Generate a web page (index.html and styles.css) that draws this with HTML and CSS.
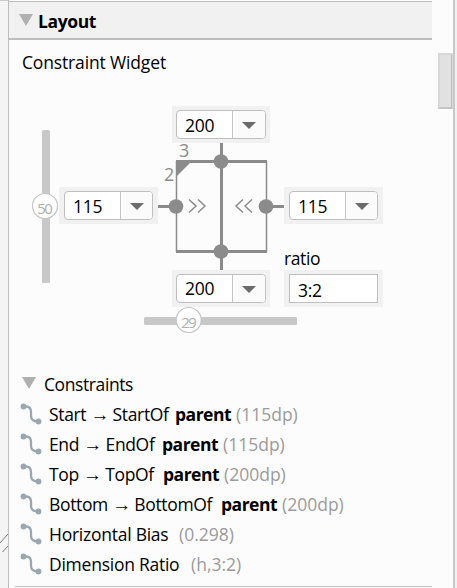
FILE: index.html
```html
<!DOCTYPE html>
<html lang="en">
<head>
<meta charset="utf-8">
<title>Layout</title>
<link rel="stylesheet" href="styles.css">
</head>
<body>
<div class="app">
  <aside class="gutter">
    <svg width="8" height="588" viewBox="0 0 8 588"><path d="M0 .5H8" stroke="#c9c9c9"/><path d="M0 543L8 534M2.500 552L8 546" stroke="#777" fill="none"/></svg>
  </aside>
  <main class="panel">
    <header class="header"><i class="twisty"></i><h1>Layout</h1></header>
    <h2 class="title">Constraint Widget</h2>
    <section class="widget">
      <svg class="diagram" width="423" height="260" viewBox="9 90 423 260">
        <g fill="#c8c8c8"><rect x="42" y="130" width="8" height="153" rx="1.500"/><rect x="144" y="317" width="153" height="8" rx="1.500"/></g>
        <g fill="#fff" stroke="#c4c4c4" stroke-width="1.200"><circle cx="45" cy="206" r="12.500"/><circle cx="188.700" cy="320" r="12.500"/></g>
        <g class="bias"><text x="37.300" y="213.500" textLength="15.500">50</text><text x="181.300" y="328" textLength="15.500">29</text></g>
        <g stroke="#8b8b8b" fill="none">
          <path stroke-width="3" d="M176 161.500H267M176 251.500H267M221.500 143V270M158 206.500H176M266 206.500H284"/>
          <path stroke-width="1.500" d="M176.500 161V252M266.500 161V252"/>
          <path stroke-width="1.500" d="M189 199.500L196 206L189 212.500M198 199.500L205 206L198 212.500M243 199.500L236 206L243 212.500M252 199.500L245 206L252 212.500"/>
        </g>
        <g fill="#8b8b8b"><path d="M176 161H192L176 177Z"/><circle cx="221" cy="161.500" r="7.300"/><circle cx="221" cy="251.500" r="7.300"/><circle cx="176" cy="206.500" r="7.300"/><circle cx="266" cy="206.500" r="7.300"/></g>
        <g class="sides"><text x="179" y="156.700">3</text><text x="164" y="181">2</text></g>
      </svg>
      <div class="field top"><div class="combo"><span>200</span><b></b></div></div>
      <div class="field left"><div class="combo"><span>115</span><b></b></div></div>
      <div class="field right"><div class="combo"><span>115</span><b></b></div></div>
      <div class="field bottom"><div class="combo"><span>200</span><b></b></div></div>
      <label class="label">ratio</label>
      <div class="field ratio"><div class="entry">3:2</div></div>
    </section>
    <section class="constraints">
      <h3><i class="twisty"></i><span>Constraints</span></h3>
      <ul>
        <li><svg class="link" viewBox="0 0 22 22"><use href="#link"/></svg><span class="name n1">Start <i>→</i> StartOf</span><strong>parent</strong><em>(115dp)</em></li>
        <li><svg class="link" viewBox="0 0 22 22"><use href="#link"/></svg><span class="name n2">End <i>→</i> EndOf</span><strong>parent</strong><em>(115dp)</em></li>
        <li><svg class="link" viewBox="0 0 22 22"><use href="#link"/></svg><span class="name n3">Top <i>→</i> TopOf</span><strong>parent</strong><em>(200dp)</em></li>
        <li><svg class="link" viewBox="0 0 22 22"><use href="#link"/></svg><span class="name n4">Bottom <i>→</i> BottomOf</span><strong>parent</strong><em>(200dp)</em></li>
        <li><svg class="link" viewBox="0 0 22 22"><use href="#link"/></svg><span class="name n5">Horizontal Bias</span><em>(0.298)</em></li>
        <li><svg class="link" viewBox="0 0 22 22"><use href="#link"/></svg><span class="name n6">Dimension Ratio</span><em>(h,3:2)</em></li>
      </ul>
    </section>
    <hr>
  </main>
  <div class="scroll"><div class="thumb"></div></div>
</div>
<svg width="0" height="0" class="defs"><symbol id="link" viewBox="0 0 22 22"><path d="M3.500 3.500H6C9.500 3.500 11 5.500 11 9V13C11 16.500 13 18.500 18.500 18.500" fill="none" stroke="#9aa7b0" stroke-width="2.300"/><circle cx="3.500" cy="3.500" r="2.900" fill="#9aa7b0"/><circle cx="18.500" cy="18.500" r="2.900" fill="#9aa7b0"/></symbol></svg>
</body>
</html>
```
FILE: styles.css
```css
* { box-sizing: border-box; }
body { margin: 0; overflow: hidden; font: 17.5px/24px "Open Sans", "Noto Sans", sans-serif; letter-spacing: -.25px; color: #000; background: #fcfcfc; }
h1, h2, h3, ul { margin: 0; padding: 0; font-size: inherit; font-weight: 400; }
i, em { font-style: normal; }
.defs { display: block; }
.app { display: flex; height: 588px; }
.gutter { width: 9px; background: #f4f4f4; border-right: 1px solid #bdbdbd; }
.gutter svg { display: block; }
.panel { width: 423px; }
.header { display: flex; height: 39px; margin-top: 1px; border-top: 1px solid #bdbdbd; border-bottom: 2px solid #bdbdbd; background: #f1f1f1; padding: 7px 0 0 10px; }
.header h1 { margin: 0 0 0 5px; font-weight: 700; line-height: 24px; letter-spacing: -.4px; }
.twisty { width: 14px; height: 12px; background: #b0b0b0; clip-path: polygon(0 0, 100% 0, 50% 100%); flex: none; }
.header .twisty { margin-top: 5px; }
.title { height: 50px; padding: 10px 0 0 13px; letter-spacing: -.15px; }
.widget { display: grid; width: 423px; height: 260px; grid-template-columns: 50px 99px 14px 98px 14px 99px 1fr; grid-template-rows: 16px 37px 44px 37px 23px 23px 37px 1fr; }
.diagram { grid-area: 1 / 1 / -1 / -1; }
.diagram text { letter-spacing: 0; }
.bias { font-size: 15px; fill: #b0b0b0; }
.sides { font-size: 18px; fill: #8b8b8b; }
.field { background: #f1f1f1; padding: 4px 4px 4px 5px; }
.top { grid-area: 2 / 4; padding-left: 4px; }
.left { grid-area: 4 / 2; }
.right { grid-area: 4 / 6; }
.bottom { grid-area: 7 / 4; padding-left: 4px; }
.label { grid-area: 6 / 6; line-height: 24px; margin-top: -1px; letter-spacing: -.4px; }
.ratio { grid-area: 7 / 6; }
.combo { display: flex; height: 29px; border: 1px solid #bfbfbf; border-radius: 4px; background: #fff; overflow: hidden; }
.combo span { width: 55px; padding-left: 8px; line-height: 28px; letter-spacing: -.2px; }
.bottom span { line-height: 26px; }
.left .combo, .right .combo { margin-right: 1px; }
.combo b { flex: 1; border-left: 1px solid #c4c4c4; background: #fbfbfb; display: flex; align-items: center; justify-content: center; }
.combo b::after { content: ""; border: 7px solid transparent; border-top-color: #6b6b6b; border-bottom: 0; margin-top: 2px; }
.entry { height: 29px; border: 1px solid #bfbfbf; background: #fff; padding-left: 8px; line-height: 31px; margin-right: 1px; }
.constraints { padding-left: 11px; padding-top: 22px; }
.constraints h3 { display: flex; height: 28px; padding-left: 2px; gap: 8px; line-height: 24px; letter-spacing: -.4px; }
.constraints .twisty { margin-top: 5px; }
ul { list-style: none; }
li { display: flex; height: 30px; line-height: 28px; white-space: nowrap; }
.link { width: 22px; height: 22px; flex: none; margin: 3px 7px 0 0; }
.name { flex: none; letter-spacing: -.35px; }
.n5, .n6 { letter-spacing: -.25px; }
.name i { display: inline-block; width: 18px; text-align: center; font-family: "Liberation Sans", sans-serif; font-size: 19px; line-height: 20px; }
strong { width: 61px; letter-spacing: -.5px; }
em { color: #9b9b9b; letter-spacing: 0; }
.n1 { width: 126px; } .n2 { width: 113px; } .n3 { width: 114px; } .n4 { width: 172px; } .n5 { width: 130px; } .n6 { width: 142px; }
hr { height: 1px; margin: 6px 0 0 6px; border: 0; background: #c4c4c4; }
.scroll { width: 23px; display: flex; justify-content: flex-end; border-right: 2px solid #c8c8c8; padding-top: 53px; }
.app::after { content: ""; flex: 1; background: #f1f1f1; }
.thumb { width: 15px; height: 56px; background: #e1e1e1; border: 2px solid #d8d8d8; border-right: 1px solid #d8d8d8; border-bottom-color: #c4c4c4; box-shadow: inset -1px 0 #bfbfbf; }
```
